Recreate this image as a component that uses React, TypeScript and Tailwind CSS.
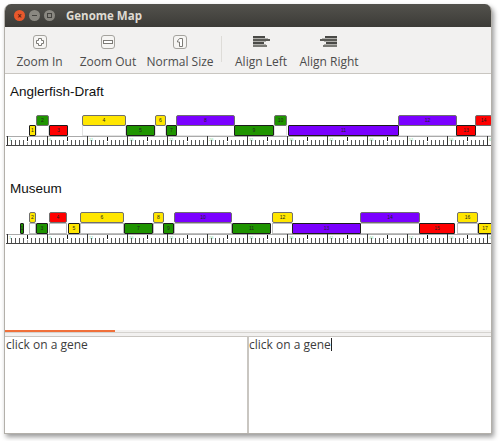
import React from "react";

type Gene = { s: number; e: number; up: boolean; c: string; t: string };
const Y = "#ffe600";
const G = "#1f9400";
const R = "#ff0000";
const P = "#7a00ff";

const row1: Gene[] = [
  { s: 36, e: 49, up: true, c: G, t: "2" },
  { s: 29, e: 36, up: false, c: Y, t: "1" },
  { s: 49, e: 68, up: false, c: R, t: "3" },
  { s: 82, e: 126, up: true, c: Y, t: "4" },
  { s: 126, e: 155, up: false, c: G, t: "5" },
  { s: 155, e: 166, up: true, c: Y, t: "6" },
  { s: 166, e: 177, up: false, c: G, t: "7" },
  { s: 176, e: 235, up: true, c: P, t: "8" },
  { s: 234, e: 274, up: false, c: G, t: "9" },
  { s: 274, e: 287, up: true, c: G, t: "10" },
  { s: 288, e: 399, up: false, c: P, t: "11" },
  { s: 398, e: 457, up: true, c: P, t: "12" },
  { s: 456, e: 476, up: false, c: R, t: "13" },
  { s: 475, e: 492, up: true, c: R, t: "14" },
];
const row2: Gene[] = [
  { s: 20, e: 24, up: false, c: G, t: "1" },
  { s: 29, e: 36, up: true, c: Y, t: "2" },
  { s: 36, e: 48, up: false, c: G, t: "3" },
  { s: 49, e: 67, up: true, c: R, t: "4" },
  { s: 68, e: 80, up: false, c: Y, t: "5" },
  { s: 80, e: 124, up: true, c: Y, t: "6" },
  { s: 124, e: 153, up: false, c: G, t: "7" },
  { s: 153, e: 164, up: true, c: Y, t: "8" },
  { s: 163, e: 174, up: false, c: G, t: "9" },
  { s: 174, e: 232, up: true, c: P, t: "10" },
  { s: 232, e: 271, up: false, c: G, t: "11" },
  { s: 272, e: 293, up: true, c: Y, t: "12" },
  { s: 292, e: 361, up: false, c: P, t: "13" },
  { s: 360, e: 420, up: true, c: P, t: "14" },
  { s: 419, e: 455, up: false, c: R, t: "15" },
  { s: 457, e: 478, up: true, c: Y, t: "16" },
  { s: 478, e: 492, up: false, c: Y, t: "17" },
];

function Ruler() {
  const ticks: React.ReactNode[] = [];
  for (let x = 0; x <= 486; x += 4) {
    const i = x / 4;
    if (i % 10 === 0) {
      ticks.push(<line key={x} x1={x + 1.5} x2={x + 1.5} y1={0} y2={9} stroke="#333" />);
      ticks.push(<text key={"l" + x} x={x + 3} y={5} fontSize="4" fill="#7fd89a" fontFamily="Liberation Sans">{i / 10 * 5 + 1}</text>);
    } else if (i % 5 === 0) {
      ticks.push(<line key={x} x1={x + 1.5} x2={x + 1.5} y1={1} y2={5} stroke="#111" />);
      ticks.push(<line key={"b" + x} x1={x + 1.5} x2={x + 1.5} y1={6} y2={9} stroke="#999" />);
    } else {
      ticks.push(<line key={x} x1={x + 1.5} x2={x + 1.5} y1={4} y2={9} stroke="#555" />);
    }
  }
  return (
    <svg width="486" height="10" className="block">
      <line x1="0" x2="486" y1="0.5" y2="0.5" stroke="#aaa" />
      <line x1="0" x2="486" y1="9.5" y2="9.5" stroke="#444" />
      {ticks}
    </svg>
  );
}

function GeneBox({ g, h, lowTop }: { g: Gene; h: number; lowTop: number }) {
  return (
    <div
      className={`absolute flex items-center justify-center box-border border text-[5px] leading-none text-[#222] ${g.up ? "rounded-[2px] border-[#6f6f6f]" : "rounded-[1px] border-[#1c1c1c]"}`}
      style={{ left: g.s - 6, width: g.e - g.s, top: g.up ? 0 : lowTop, height: h, background: g.c, fontFamily: "Liberation Sans" }}
    >
      {g.t}
    </div>
  );
}

function Track({ genes, h, lowTop, ghost }: { genes: Gene[]; h: number; lowTop: number; ghost: string }) {
  return (
    <div className="relative ml-px" style={{ height: lowTop + h }}>
      {genes.filter((g) => g.up).map((g) => (
        <div
          key={"g" + g.t}
          className="absolute box-border border"
          style={{ left: g.s - 6, width: g.e - g.s, top: lowTop, height: h, borderColor: ghost }}
        />
      ))}
      {genes.map((g) => (
        <GeneBox key={g.t} g={g} h={h} lowTop={lowTop} />
      ))}
    </div>
  );
}

const stroke = "#7d7b76";
function BoxIcon({ children }: { children: React.ReactNode }) {
  return (
    <svg width="14" height="14" viewBox="0 0 14 14" className="block">
      <rect x="0.5" y="0.5" width="13" height="13" rx="2.5" fill="#f6f5f3" stroke="#a5a39e" />
      {children}
    </svg>
  );
}

const IconIn = () => (
  <BoxIcon>
    <path d="M5.5 3.5h3v2h2v3h-2v2h-3v-2h-2v-3h2z" fill="#fff" stroke={stroke} />
  </BoxIcon>
);
const IconOut = () => (
  <BoxIcon>
    <rect x="2.5" y="5.5" width="9" height="3" fill="#fff" stroke={stroke} />
  </BoxIcon>
);
const IconNormal = () => (
  <BoxIcon>
    <path d="M6.5 3.5h3v8h-3v-4.5h-2v-1z" fill="#fff" stroke={stroke} />
  </BoxIcon>
);
const AlignL = () => (
  <svg width="18" height="14" viewBox="0 0 18 14" className="block">
    <rect x="1" y="1" width="12" height="12" fill="#fff" opacity="0" />
    <rect x="1" y="1" width="12" height="2" fill="#4a4a47" />
    <rect x="1" y="3" width="15" height="1" fill="#b0afab" />
    <rect x="1" y="4" width="17" height="2" fill="#5a5a56" />
    <rect x="1" y="6" width="13" height="1" fill="#b0afab" />
    <rect x="1" y="7" width="11" height="2" fill="#4a4a47" />
    <rect x="1" y="9" width="13" height="1" fill="#b0afab" />
    <rect x="1" y="10" width="14" height="2" fill="#7a7a75" />
  </svg>
);
const AlignR = () => (
  <svg width="18" height="14" viewBox="0 0 18 14" className="block">
    <rect x="5" y="1" width="12" height="2" fill="#4a4a47" />
    <rect x="2" y="3" width="15" height="1" fill="#b0afab" />
    <rect x="0" y="4" width="17" height="2" fill="#5a5a56" />
    <rect x="4" y="6" width="13" height="1" fill="#b0afab" />
    <rect x="6" y="7" width="11" height="2" fill="#4a4a47" />
    <rect x="4" y="9" width="13" height="1" fill="#b0afab" />
    <rect x="3" y="10" width="14" height="2" fill="#7a7a75" />
  </svg>
);

function Tool({ w, label, children }: { w: string; label: string; children: React.ReactNode }) {
  return (
    <div className={`flex flex-col items-center ${w}`}>
      <div className="flex h-[14px] items-center">{children}</div>
      <div className="mt-[5px] whitespace-nowrap text-[12px] leading-[16px] text-[#4c4c4c]">{label}</div>
    </div>
  );
}

export default function App() {
  return (
    <div className="h-[441px] w-[500px] overflow-hidden bg-white pl-[4px] pt-[4px]" style={{ fontFamily: "'Open Sans', sans-serif" }}>
      <div className="flex h-[430px] w-[488px] flex-col overflow-hidden rounded-t-[7px] border-x border-b border-[#b3b0aa] bg-white shadow-[2px_3px_5px_rgba(0,0,0,0.4)]">
        <div className="flex h-[23px] shrink-0 items-center bg-gradient-to-b from-[#53524d] to-[#3c3b37] pl-[9px]">
          <div className="flex h-[11px] w-[11px] items-center justify-center rounded-full bg-[#e8582c] text-[8px] font-bold leading-none text-[#5a2010]">×</div>
          <div className="ml-[4px] flex h-[11px] w-[11px] items-center justify-center rounded-full bg-[#8a8881]"><div className="h-px w-[5px] bg-[#44433f]" /></div>
          <div className="ml-[4px] flex h-[11px] w-[11px] items-center justify-center rounded-full bg-[#8a8881]"><div className="h-[5px] w-[5px] border border-[#44433f]" /></div>
          <div className="ml-[11px] text-[11.5px] font-bold text-[#dfdbd2]">Genome Map</div>
        </div>
        <div className="flex h-[47px] shrink-0 items-start border-b border-[#c9c6c1] bg-[#f2f1f0] pt-[8px]">
          <Tool w="w-[69px]" label="Zoom In"><IconIn /></Tool>
          <Tool w="w-[68px]" label="Zoom Out"><IconOut /></Tool>
          <Tool w="w-[76px]" label="Normal Size"><IconNormal /></Tool>
          <div className="mx-[3px] mt-px h-[26px] w-px bg-[#dedcd8]" />
          <Tool w="w-[72px]" label="Align Left"><AlignL /></Tool>
          <Tool w="w-[64px]" label="Align Right"><AlignR /></Tool>
        </div>
        <div className="flex flex-1 flex-col bg-white">
          <div className="ml-[5px] mt-[10px] text-[13.5px] leading-[16px] text-[#111]" style={{ fontFamily: "'Liberation Sans', sans-serif" }}>Anglerfish-Draft</div>
          <div className="mt-[15px]">
            <Track genes={row1} h={11} lowTop={10} ghost="#e2e2e2" />
            <div className="ml-px"><Ruler /></div>
          </div>
          <div className="ml-[5px] mt-[35px] text-[13.5px] leading-[16px] text-[#111]" style={{ fontFamily: "'Liberation Sans', sans-serif" }}>Museum</div>
          <div className="mt-[15px]">
            <Track genes={row2} h={11} lowTop={11} ghost="#bdbdbd" />
            <div className="ml-px"><Ruler /></div>
          </div>
        </div>
        <div className="flex h-[7px] shrink-0 flex-col border-b border-[#c9c6c1] bg-[#f2f1f0]">
          <div className="h-[2px] w-[110px] bg-[#f0703a]" />
          <div className="h-px bg-[#d5d3cf]" />
        </div>
        <div className="flex h-[96px] shrink-0 text-[12px] leading-[16px] text-[#3c3c3c]">
          <div className="w-[244px] border-r-2 border-[#c9c6c1] pl-px">click on a gene</div>
          <div className="flex flex-1">
            <span>click on a gene</span>
            <span className="mt-px h-[13px] w-px bg-[#222]" />
          </div>
        </div>
      </div>
    </div>
  );
}
